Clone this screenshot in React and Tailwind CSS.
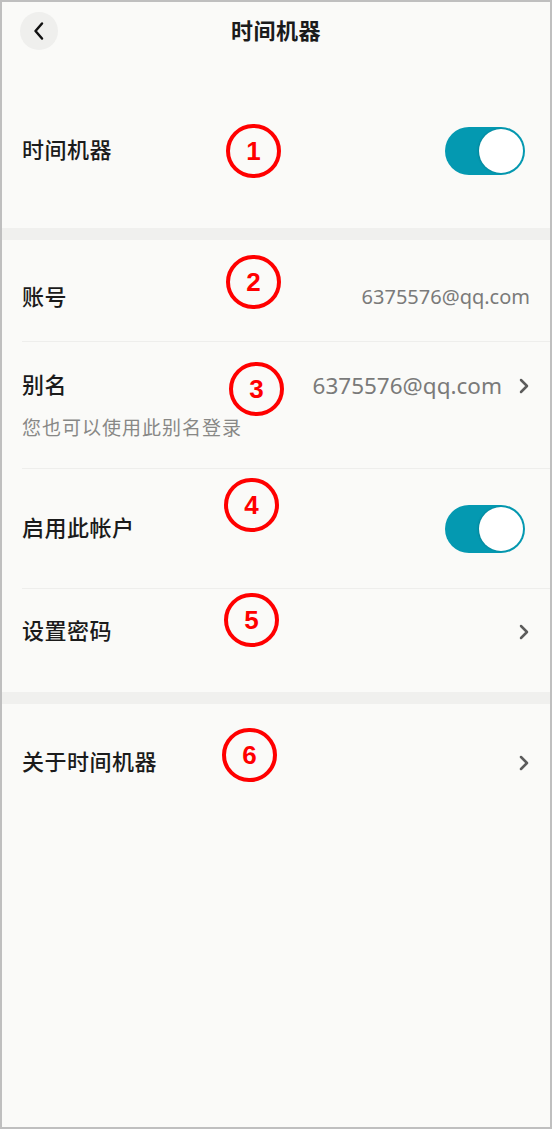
import React from "react";

const FONT = { fontFamily: '"Noto Sans", "Noto Sans CJK SC", sans-serif' };

function Toggle() {
  return (
    <div className="relative w-[80px] h-[48px] rounded-full bg-[#0499b1]">
      <div className="absolute right-[2px] top-[2px] w-[44px] h-[44px] rounded-full bg-white shadow-[-1px_0_2px_rgba(0,0,0,0.15)]" />
    </div>
  );
}

function Chevron() {
  return (
    <svg width="12" height="18" viewBox="0 0 12 18" className="shrink-0">
      <path d="M3 3 L9 9 L3 15" fill="none" stroke="#5c5c5c" strokeWidth="2.5" strokeLinecap="round" strokeLinejoin="round" />
    </svg>
  );
}

function Mark({ n, left, top }) {
  return (
    <div
      className="absolute w-[55px] h-[54px] rounded-full border-[4.5px] border-[#ff0000] flex items-center justify-center text-[#ff0000] text-[26px] font-bold leading-none"
      style={{ left, top, fontFamily: '"Liberation Sans", Arial, sans-serif' }}
    >
      {n}
    </div>
  );
}

const LABEL = "text-[22px] leading-none tracking-[0.5px] font-medium mb-[4px]";

export default function App() {
  return (
    <div
      className="relative w-[552px] h-[1129px] border-2 border-[#bfbfbf] bg-[#fafaf8] flex flex-col text-[#1b1b1b] box-border"
      style={FONT}
    >
      {/* Header */}
      <div className="h-[58px] grid grid-cols-[1fr_auto_1fr] items-center">
        <div className="pl-[18px]">
          <div className="w-[38px] h-[38px] rounded-full bg-[#efefed] flex items-center justify-center">
            <svg width="14" height="20" viewBox="0 0 14 20">
              <path d="M10 2.5 L3.5 10 L10 17.5" fill="none" stroke="#111" strokeWidth="2.5" strokeLinecap="round" strokeLinejoin="round" />
            </svg>
          </div>
        </div>
        <div className="text-[22px] font-bold leading-none tracking-[0.5px] mb-[2px]">时间机器</div>
        <div />
      </div>

      {/* Section 1 */}
      <div className="h-[168px] pt-[14px] pl-[20px] pr-[25px] flex items-center justify-between">
        <span className={LABEL}>时间机器</span>
        <Toggle />
      </div>

      <div className="h-[12px] bg-[#f0f0ee]" />

      {/* Section 2 */}
      <div className="pt-[14px] pb-[17px]">
        <div className="ml-[20px] pr-[20px] h-[88px] border-b border-[#eeeeec] flex items-center justify-between">
          <span className={LABEL}>账号</span>
          <span className="text-[20px] text-[#7a7a7a] leading-none mb-[2px]">6375576@qq.com</span>
        </div>
        <div className="ml-[20px] pr-[20px] h-[127px] border-b border-[#eeeeec] flex flex-col justify-center">
          <div className="flex items-center justify-between h-[30px]">
            <span className="text-[22px] leading-[30px] tracking-[0.5px] font-medium">别名</span>
            <div className="flex items-center gap-[16px] mt-[4px]">
              <span className="text-[22.5px] text-[#7a7a7a] leading-none">6375576@qq.com</span>
              <Chevron />
            </div>
          </div>
          <div className="mt-[16px] text-[19px] leading-[26px] text-[#888886] tracking-[1px]">您也可以使用此别名登录</div>
        </div>
        <div className="ml-[20px] pr-[25px] h-[120px] border-b border-[#eeeeec] flex items-center justify-between">
          <span className={LABEL}>启用此帐户</span>
          <Toggle />
        </div>
        <div className="ml-[20px] pr-[20px] h-[86px] flex items-center justify-between">
          <span className={LABEL}>设置密码</span>
          <Chevron />
        </div>
      </div>

      <div className="h-[12px] bg-[#f0f0ee]" />

      {/* Section 3 */}
      <div className="pt-[16px]">
        <div className="ml-[20px] pr-[20px] h-[86px] flex items-center justify-between">
          <span className={LABEL}>关于时间机器</span>
          <Chevron />
        </div>
      </div>

      {/* Annotations */}
      <Mark n="1" left={224} top={122} />
      <Mark n="2" left={224} top={253} />
      <Mark n="3" left={227} top={360} />
      <Mark n="4" left={222} top={476} />
      <Mark n="5" left={222} top={591} />
      <Mark n="6" left={220} top={726} />
    </div>
  );
}
